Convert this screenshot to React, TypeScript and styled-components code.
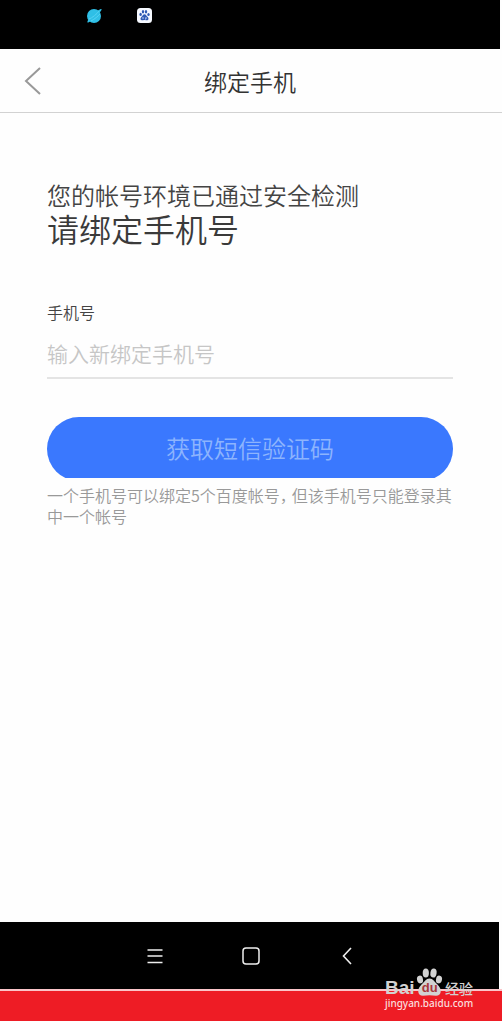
import React from "react";
import styled, { createGlobalStyle } from "styled-components";

const GlobalStyle = createGlobalStyle`
  *, *::before, *::after { box-sizing: border-box; }
  body {
    margin: 0;
    background: #fefefe;
    font-family: "Noto Sans CJK SC", "Liberation Sans", sans-serif;
    font-weight: 350;
  }
  button, input { font: inherit; margin: 0; padding: 0; border: 0; background: none; }
`;

const Screen = styled.div`
  display: flex;
  flex-direction: column;
  min-height: 100vh;
`;

const StatusBar = styled.div`
  display: flex;
  align-items: flex-start;
  gap: 34px;
  height: 49px;
  margin-right: 2px;
  padding: 8px 86px;
  background: #000;
`;

const Header = styled.header`
  display: grid;
  grid-template-columns: 64px 1fr 64px;
  align-items: center;
  height: 64px;
  padding-right: 2px;
  border-bottom: 1px solid #d2d2d2;
`;

const BackButton = styled.button`
  display: flex;
  align-items: center;
  height: 48px;
  padding-left: 24px;
`;

const Title = styled.h1`
  margin: 0;
  color: #333;
  font-size: 23px;
  font-weight: 350;
  line-height: 32px;
  text-align: center;
`;

const Content = styled.main`
  flex: 1;
  padding: 66px 49px 32px 47px;
`;

const Status = styled.p`
  margin: 0;
  color: #444;
  font-size: 24px;
  line-height: 32px;
`;

const Prompt = styled.h2`
  margin: 0 0 50px;
  color: #3a3a3a;
  font-size: 32px;
  font-weight: 350;
  line-height: 35px;
`;

const Form = styled.form`
  display: flex;
  flex-direction: column;
`;

const Label = styled.label`
  color: #444;
  font-size: 16px;
  line-height: 32px;
`;

const PhoneInput = styled.input`
  width: 100%;
  height: 51px;
  border-bottom: 2px solid #e4e4e4;
  border-radius: 0;
  color: #333;
  font-size: 21px;
  outline: none;
  &::placeholder { color: #c6c6c6; opacity: 1; }
`;

const ButtonClip = styled.div`
  height: 61px;
  margin-top: 38px;
  overflow: hidden;
`;

const SubmitButton = styled.button`
  display: block;
  width: 100%;
  height: 64px;
  padding-bottom: 2px;
  border-radius: 32px;
  background: #3a78fe;
  color: #8db4fd;
  font-size: 24px;
  line-height: 62px;
`;

const Note = styled.p`
  margin: 7px 0 0;
  color: #999;
  font-size: 16px;
  line-height: 21px;
`;

const Comma = styled.span`
  margin-right: 4px;
  font-feature-settings: "halt";
`;

const NavBar = styled.nav`
  display: flex;
  justify-content: center;
  align-items: center;
  gap: 66px;
  height: 67px;
  margin-right: 1px;
  padding-left: 2px;
  border-right: 2px solid #fefefe;
  background: #000;
`;

const NavButton = styled.button`
  display: flex;
  align-items: center;
  justify-content: center;
  width: 30px;
  height: 30px;
`;

const Footer = styled.footer`
  position: relative;
  height: 32px;
  border-top: 2px solid #fbc5c9;
  background: #ee1c25;
`;

const Watermark = styled.div`
  position: absolute;
  right: 29px;
  bottom: 12px;
  width: 88px;
  color: #fbdcde;
`;

const Brand = styled.div`
  display: flex;
  align-items: flex-end;
  justify-content: space-between;
  color: #d2d2d2;
  font-family: "Liberation Sans", "Noto Sans CJK SC", sans-serif;
  font-size: 19px;
  font-weight: 700;
  line-height: 16px;
`;

const BrandSuffix = styled.span`
  font-family: "Noto Sans CJK SC", sans-serif;
  font-size: 14px;
  font-weight: 500;
`;

const Paw = styled.span`
  position: relative;
  width: 27px;
  height: 28px;
`;

const PawText = styled.span`
  position: absolute;
  left: 0;
  right: 0;
  bottom: 2px;
  color: #a8383c;
  font-size: 13px;
  line-height: 12px;
  text-align: center;
`;

const Address = styled.a`
  display: block;
  margin-top: 1px;
  color: inherit;
  font-family: "Noto Sans", sans-serif;
  font-size: 10px;
  font-weight: 500;
  line-height: 12px;
  text-decoration: none;
`;

function GlobeIcon() {
  return (
    <svg width="17" height="16" viewBox="0 0 17 16" aria-hidden="true">
      <circle cx="8" cy="8" r="7" fill="#2fbfe6" />
      <path d="M1.500 14.500C0 12 12 1 15.500 1C16.500 3 4 15 1.500 14.500Z" fill="#2fbfe6" />
      <path d="M3 11C6 10 11 6 13 3M5 13C9 11 12 8 14 6" fill="none" stroke="#55d2f2" strokeWidth="1" />
    </svg>
  );
}

function PawAppIcon() {
  return (
    <svg width="15" height="15" viewBox="0 0 15 15" aria-hidden="true">
      <rect width="15" height="15" rx="3.500" fill="#f6f9ff" />
      <g fill="#315cb5">
        <ellipse cx="3.600" cy="6.400" rx="1.200" ry="1.600" />
        <ellipse cx="6" cy="3.800" rx="1.200" ry="1.700" />
        <ellipse cx="9" cy="3.800" rx="1.200" ry="1.700" />
        <ellipse cx="11.500" cy="6.500" rx="1.200" ry="1.600" />
        <path d="M7.500 6.200C9 6.200 9.500 8 10.700 9C12.300 10.700 11.200 12.600 9.500 12.200Q7.500 11.700 5.500 12.200C3.600 12.600 2.700 10.700 4.300 9C5.500 8 6 6.200 7.500 6.200Z" />
      </g>
      <path d="M6 9v2M9 9v2H8" fill="none" stroke="#dce8ff" strokeWidth=".8" />
    </svg>
  );
}

function PawLogo() {
  return (
    <svg width="27" height="28" viewBox="0 0 26 28" fill="#d2d2d2" aria-hidden="true">
      <ellipse cx="3.500" cy="11.500" rx="3" ry="3.900" transform="rotate(-12 3.500 11.500)" />
      <ellipse cx="9.300" cy="5" rx="3.100" ry="4.600" />
      <ellipse cx="17" cy="5" rx="3.100" ry="4.600" transform="rotate(8 17 5)" />
      <ellipse cx="22.500" cy="11.500" rx="3" ry="3.900" transform="rotate(12 22.500 11.500)" />
      <path d="M13 10.500C16.500 10.500 18 14 21 16.500C26 21.500 25 27.800 19.500 27.800Q13 26.800 6.500 27.800C1 27.800 0 21.500 5 16.500C8 14 9.500 10.500 13 10.500Z" />
    </svg>
  );
}

export default function App() {
  return (
    <>
      <GlobalStyle />
      <Screen>
        <StatusBar>
          <GlobeIcon />
          <PawAppIcon />
        </StatusBar>
        <Header>
          <BackButton type="button" aria-label="返回">
            <svg width="18" height="28" viewBox="0 0 18 28" fill="none" stroke="#999" strokeWidth="2" aria-hidden="true">
              <path d="M16 1L2 14L16 27" />
            </svg>
          </BackButton>
          <Title>绑定手机</Title>
        </Header>
        <Content>
          <Status>您的帐号环境已通过安全检测</Status>
          <Prompt>请绑定手机号</Prompt>
          <Form onSubmit={(event) => event.preventDefault()}>
            <Label htmlFor="phone">手机号</Label>
            <PhoneInput id="phone" type="tel" placeholder="输入新绑定手机号" />
            <ButtonClip>
              <SubmitButton type="submit">获取短信验证码</SubmitButton>
            </ButtonClip>
          </Form>
          <Note>
            一个手机号可以绑定5个百度帐号<Comma>，</Comma>但该手机号只能登录其中一个帐号
          </Note>
        </Content>
        <NavBar>
          <NavButton type="button" aria-label="菜单">
            <svg width="16" height="16" viewBox="0 0 16 16" stroke="#eee" strokeWidth="1.500" aria-hidden="true">
              <path d="M0.500 2H15.500M0.500 8H15.500M0.500 14.500H15.500" />
            </svg>
          </NavButton>
          <NavButton type="button" aria-label="主页">
            <svg width="18" height="18" viewBox="0 0 18 18" fill="none" stroke="#eee" strokeWidth="1.500" aria-hidden="true">
              <rect x="1" y="1" width="16" height="16" rx="3" />
            </svg>
          </NavButton>
          <NavButton type="button" aria-label="后退">
            <svg width="10" height="18" viewBox="0 0 10 18" fill="none" stroke="#eee" strokeWidth="1.600" aria-hidden="true">
              <path d="M9 1L1.500 9L9 17" />
            </svg>
          </NavButton>
        </NavBar>
        <Footer>
          <Watermark>
            <Brand>
              <span>Bai</span>
              <Paw>
                <PawLogo />
                <PawText>du</PawText>
              </Paw>
              <BrandSuffix>经验</BrandSuffix>
            </Brand>
            <Address href="#jingyan">jingyan.baidu.com</Address>
          </Watermark>
        </Footer>
      </Screen>
    </>
  );
}
